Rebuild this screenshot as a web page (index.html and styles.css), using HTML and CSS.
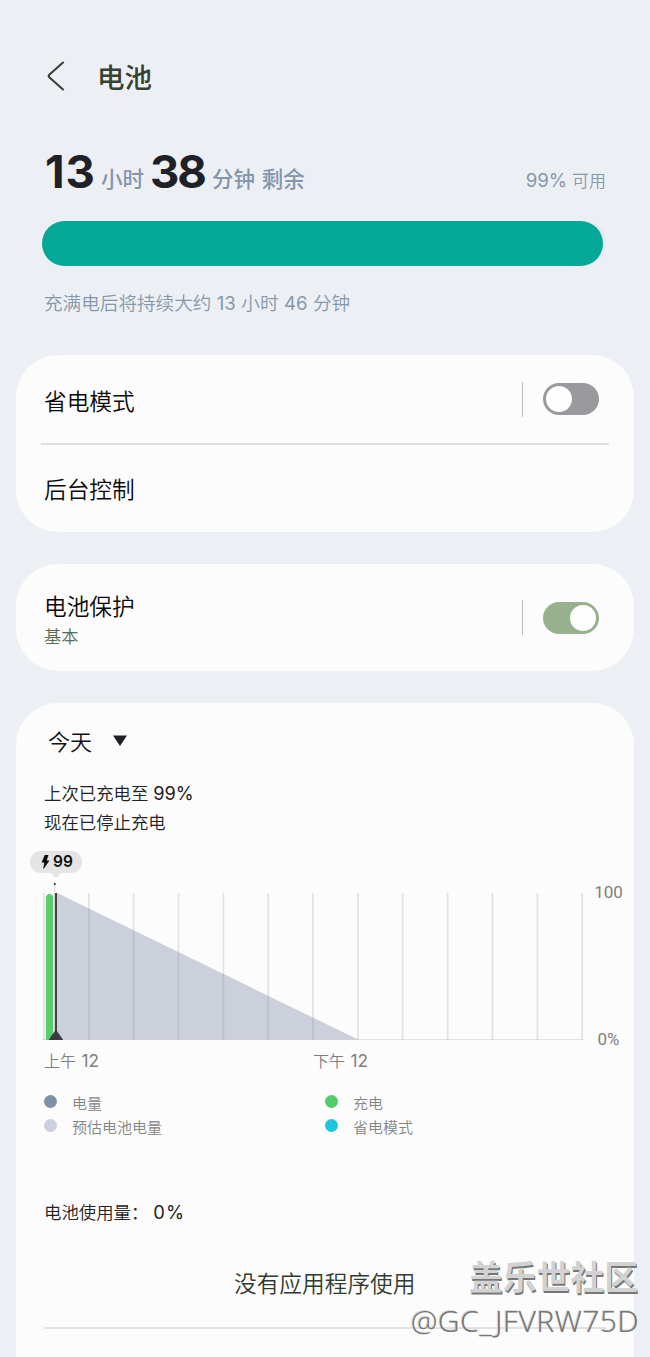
FILE: index.html
```html
<!DOCTYPE html>
<html lang="zh-CN">
<head>
<meta charset="utf-8">
<title>电池</title>
<link rel="stylesheet" href="styles.css">
</head>
<body>
<main class="screen">
  <header class="topbar">
    <svg class="back" width="18" height="30" viewBox="0 0 18 30"><path d="M16 1.5 2.3 13.8Q1.2 15 2.3 16.2L16 28.5" fill="none" stroke="#38423a" stroke-width="2.1" stroke-linecap="round"/></svg>
    <h1 class="title">电池</h1>
  </header>

  <section class="summary">
    <div class="remaining">
      <div class="time"><b class="num num-h">13</b><span class="unit unit-h">小时</span><b class="num num-m">38</b><span class="unit">分钟 剩余</span></div>
      <div class="percent"><span class="latin">99%</span> 可用</div>
    </div>
    <div class="meter"><div class="meter-fill" style="width:99.4%"></div></div>
    <p class="estimate">充满电后将持续大约 <span class="latin">13</span> 小时 <span class="latin">46</span> 分钟</p>
  </section>

  <section class="card modes">
    <div class="row row-saver"><span class="label">省电模式</span><i class="divider"></i><span class="switch"><i class="knob"></i></span></div>
    <div class="row row-bg"><span class="label">后台控制</span></div>
  </section>

  <section class="card protect">
    <div class="row row-protect">
      <div class="stack"><span class="label">电池保护</span><span class="sub">基本</span></div>
      <i class="divider"></i><span class="switch on"><i class="knob"></i></span>
    </div>
  </section>

  <section class="card usage">
    <div class="day"><span>今天</span><svg width="16" height="12" viewBox="0 0 16 12"><path d="M1 .5H15L8 11Z" fill="#202124"/></svg></div>
    <p class="status">上次已充电至 <span class="latin">99%</span><br>现在已停止充电</p>
    <div class="bubble"><svg width="9" height="14" viewBox="0 0 9 14"><path d="M4 0 1 7.3H3.6L2.6 13.5 8 5.8H5.4L7.2 0Z" fill="#050505" stroke="#050505" stroke-width=".5"/></svg><span>99</span></div>
    <div class="plot">
      <svg class="chart" width="542" height="166" viewBox="0 0 542 166">
        <path d="M13 18.5V165.5H315Z" fill="#cbd0da"/>
        <g stroke="#778" stroke-opacity=".19" stroke-width="1.7">
          <path d="M1 19V166M45.8 19V166M90.6 19V166M135.5 19V166M180.4 19V166M225.2 19V166M270 19V166M314.9 19V166M359.7 19V166M404.6 19V166M449.4 19V166M494.3 19V166M539.2 19V166"/>
          <path d="M0 165.5H540" stroke-width="1"/>
        </g>
        <path d="M3 166V23.5a3.5 3.5 0 0 1 7 0V166Z" fill="#55d06a"/>
        <path d="M11.8 9V18" stroke="#bce0c3" stroke-width="1"/>
        <path d="M11.8 9V11" stroke="#252c30" stroke-width="1.5"/>
        <path d="M12.9 19V164" stroke="#414146" stroke-width="2.2"/>
        <path d="M12.9 155.5 20.2 166H5.6Z" fill="#3c3c42"/>
      </svg>
      <div class="scale"><span>100</span><span>0%</span></div>
    </div>
    <div class="hours"><span>上午 <span class="latin">12</span></span><span>下午 <span class="latin">12</span></span></div>
    <div class="legend">
      <span class="key"><i class="dot level"></i>电量</span><span class="key"><i class="dot charge"></i>充电</span>
      <span class="key"><i class="dot forecast"></i>预估电池电量</span><span class="key"><i class="dot saver"></i>省电模式</span>
    </div>
    <p class="total">电池使用量：<span class="latin">0%</span></p>
    <p class="empty">没有应用程序使用</p>
    <div class="rule"></div>
  </section>
  <div class="watermark"><div class="community">盖乐世社区</div><div class="handle">@GC_JFVRW75D</div></div>
</main>
</body>
</html>
```
FILE: styles.css
```css
* { box-sizing: border-box; }
body {
  margin: 0;
  background: #ecf0f4;
  font-family: "Noto Sans CJK SC", sans-serif;
  font-weight: 350;
  color: #111;
}
h1, p { margin: 0; }
i { font-style: normal; }
.latin { font-family: Inter, sans-serif; font-weight: 400; }
.screen {
  position: relative;
  width: 650px;
  height: 1357px;
  overflow: hidden;
}
.topbar {
  display: flex;
  align-items: center;
  height: 151px;
  padding: 1px 0 0 47px;
}
.title {
  margin-left: 32px;
  font-size: 27.5px;
  line-height: 40px;
  font-weight: 500;
  color: #344331;
}
.summary { height: 204px; padding: 0 44px 0 42px; }
.remaining {
  display: flex;
  justify-content: space-between;
  align-items: baseline;
  height: 70px;
  line-height: 46px;
  padding-left: 3px;
}
.time { display: flex; align-items: baseline; white-space: nowrap; }
.num {
  font: 700 45.5px/40px Inter, sans-serif;
  letter-spacing: -2px;
  color: #202127;
  transform: translateY(1px);
}
.num-h { width: 56px; letter-spacing: .8px; }
.num-m { width: 62px; }
.unit { font-size: 21.5px; font-weight: 500; color: #8495ac; word-spacing: 2px; }
.unit-h { width: 49px; }
.percent {
  padding-top: 1px;
  font-size: 17px;
  color: #8997aa;
  white-space: nowrap;
  word-spacing: 1px;
}
.percent .latin { font-size: 18.7px; }
.meter {
  width: 564px;
  height: 45px;
  border-radius: 23px;
  background: #e4e9ec;
}
.meter-fill { height: 45px; border-radius: 23px; background: #03a996; }
.estimate {
  margin: 21px 0 0 2px;
  font-size: 18.6px;
  line-height: 30px;
  color: #8997aa;
  white-space: nowrap;
  word-spacing: 1.3px;
}
.card {
  width: 618px;
  margin-left: 16px;
  border-radius: 42px;
  background: #fcfcfc;
}
.modes { height: 177px; margin-bottom: 32px; }
.protect { height: 107px; margin-bottom: 32px; }
.row { display: flex; align-items: center; margin: 0 25px; padding-left: 3px; }
.row-saver { height: 90px; border-bottom: 2px solid #e0e0e0; }
.row-bg { height: 88px; }
.row-protect { height: 107px; }
.label { flex: 1; padding-top: 3px; font-size: 22.7px; line-height: 32px; color: #080808; }
.row-bg .label { padding-top: 0; }
.stack { display: flex; flex: 1; flex-direction: column; padding-top: 2px; }
.stack .label { flex: none; }
.sub { font-size: 17.2px; line-height: 28px; color: #586e55; }
.divider { width: 1px; height: 35px; background: #bdbdbf; }
.switch {
  display: flex;
  width: 56px;
  height: 32px;
  margin: 0 10px 0 20px;
  padding: 3px;
  border-radius: 16px;
  background: #9a999e;
}
.switch.on { justify-content: flex-end; background: #97b18e; }
.knob { width: 26px; height: 26px; border-radius: 50%; background: #fefefe; }
.usage { height: 700px; padding: 21px 0 0 28px; }
.day {
  display: flex;
  align-items: center;
  gap: 20px;
  height: 32px;
  padding-left: 4px;
  font-size: 22px;
}
.day svg { margin-top: 1px; }
.status { margin-top: 23px; font-size: 17.4px; line-height: 27.5px; color: #222; }
.status .latin { font-size: 18.2px; margin-left: 1px; }
.bubble {
  position: relative;
  display: flex;
  align-items: center;
  gap: 3px;
  width: 52px;
  height: 22px;
  margin: 16px 0 1px -14px;
  padding-left: 11px;
  border-radius: 11px;
  background: #e4e4e5;
  font: 600 15.5px/22px Inter, sans-serif;
}
.bubble::after {
  content: "";
  position: absolute;
  top: 22px;
  left: 21px;
  border: 5px solid transparent;
  border-top-color: #e4e4e5;
  border-bottom: 0;
}
.plot { display: flex; height: 167px; }
.chart { display: block; margin-left: -1px; }
.scale {
  display: flex;
  flex-direction: column;
  justify-content: space-between;
  align-items: center;
  width: 47px;
  height: 175px;
  padding: 8px 0 0;
  font: 17px/20px Roboto, sans-serif;
  color: #7f7f80;
}
.hours {
  display: flex;
  height: 39px;
  padding-top: 5px;
  font-size: 16px;
  line-height: 28px;
  color: #7f7f80;
}
.hours > span { width: 269px; }
.hours .latin { margin-left: 2px; font-size: 17.3px; }
.legend {
  display: grid;
  grid-template-columns: 281px 1fr;
  grid-auto-rows: 23.5px;
  margin-top: 11px;
  font-size: 15px;
  color: #858586;
}
.key { display: flex; align-items: center; gap: 15px; }
.dot { width: 13px; height: 13px; margin-bottom: 2px; border-radius: 50%; }
.level { background: #7d91a9; }
.charge { background: #53cc69; }
.forecast { background: #cbd0de; }
.saver { background: #1cc7de; }
.total { margin-top: 60px; font-size: 17.4px; line-height: 28px; color: #222; }
.total .latin { margin-left: 5px; font-size: 18.4px; letter-spacing: 1px; }
.empty {
  margin: 40px 0 0 190px;
  font-size: 22.7px;
  line-height: 34px;
  color: #303b2d;
}
.rule { width: 562px; height: 2px; margin-top: 27px; background: #e2e2e3; }
.watermark {
  position: absolute;
  right: 12px;
  bottom: 15px;
  color: #d6d6d6;
  text-align: right;
  white-space: nowrap;
}
.community {
  font-size: 33.8px;
  line-height: 44px;
  font-weight: 700;
  color: #d2d2d2;
  text-shadow: 1px 1.5px #777;
  transform: translateY(-1px);
}
.handle {
  margin-right: -1px;
  font: 300 30.2px/43px "Noto Sans", sans-serif;
  letter-spacing: .3px;
  color: #777;
  text-shadow: -1px -1px #ddd;
}
```
